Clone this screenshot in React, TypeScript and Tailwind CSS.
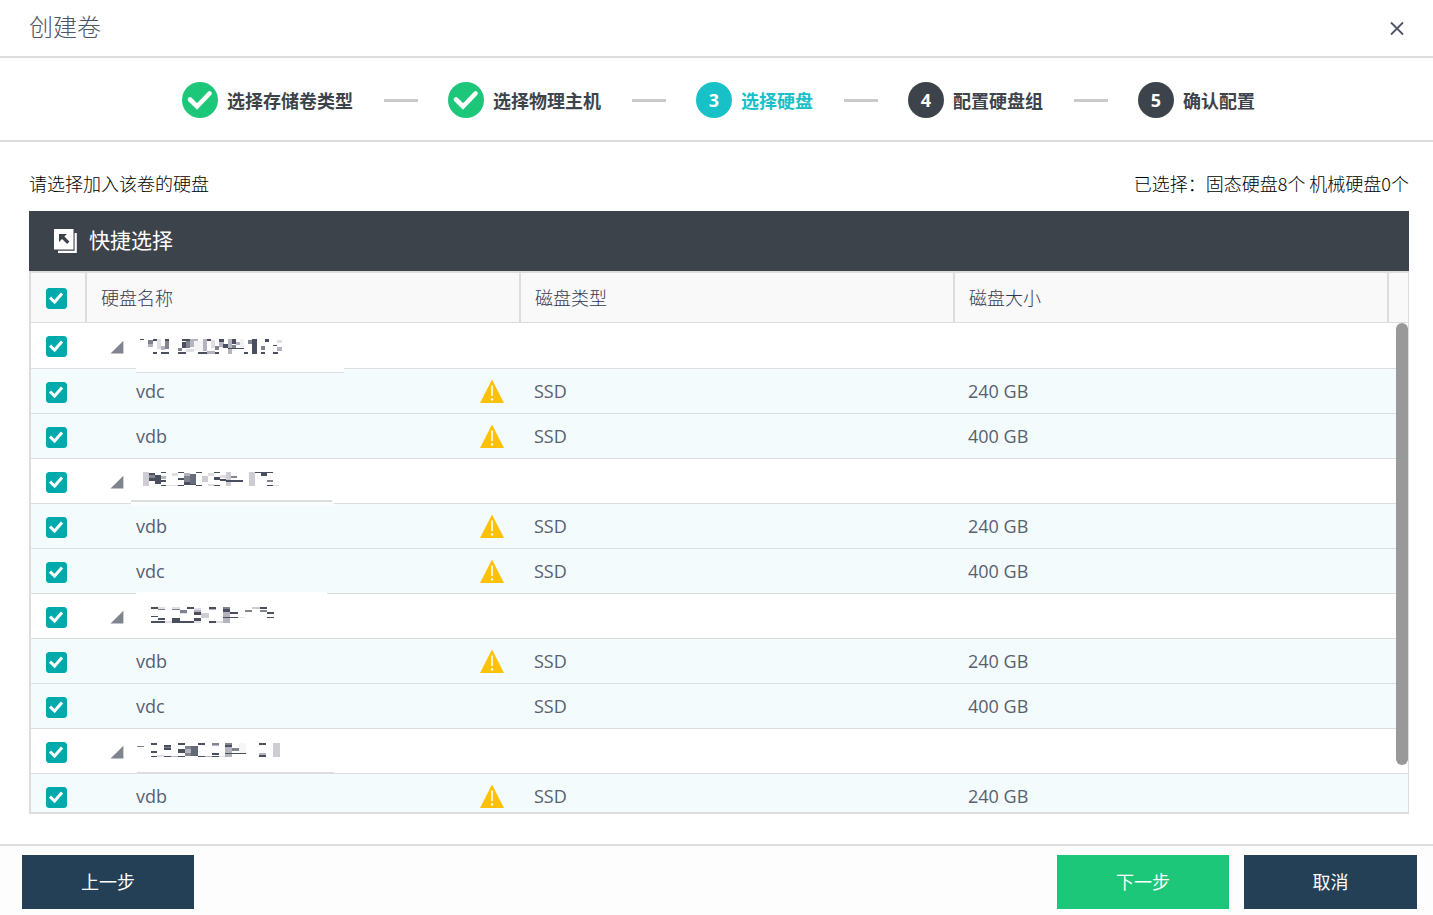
import { Fragment } from "react";

interface Disk {
  name: string;
  type: string;
  size: string;
  warn: boolean;
}

// x, y, width, height, fill
type Block = [number, number, number, number, string];

interface HostGroup {
  id: string;
  mask: Block[];
  disks: Disk[];
}

const D = "#4a4f60";
const M = "#80848f";
const G = "#b3b4bd";
const L = "#dfdfe3";
const W = "#ffffff";
const LINE = "#dddddd";

const steps = [
  { label: "选择存储卷类型", state: "done" },
  { label: "选择物理主机", state: "done" },
  { label: "选择硬盘", state: "active" },
  { label: "配置硬盘组", state: "todo" },
  { label: "确认配置", state: "todo" },
];

const groups: HostGroup[] = [
  {
    id: "host-1",
    mask: [
      [108, 30, 624, 129, W], [108, 159, 624, 3, LINE],
      [120, 60, 12, 3, D], [144, 63, 14, 12, M], [144, 75, 14, 9, G], [158, 99, 13, 6, D], [158, 60, 12, 6, D],
      [171, 60, 12, 30, L], [183, 81, 12, 12, G], [183, 99, 24, 6, D], [195, 60, 12, 6, D], [195, 66, 12, 24, M],
      [246, 60, 24, 6, D], [234, 87, 12, 10, M], [246, 69, 12, 18, D], [258, 66, 12, 21, M], [234, 99, 24, 6, D],
      [270, 60, 12, 24, G], [258, 90, 24, 9, L], [282, 60, 12, 6, G], [282, 66, 26, 30, "#f3f3f5"], [308, 60, 12, 36, G],
      [294, 99, 26, 6, D], [320, 60, 12, 6, D], [321, 96, 24, 9, G], [333, 63, 12, 24, L], [345, 99, 12, 6, D],
      [345, 81, 12, 12, M], [357, 60, 14, 9, D], [357, 69, 14, 15, G], [370, 75, 14, 12, D], [384, 60, 12, 45, G],
      [396, 60, 12, 15, D], [384, 87, 48, 3, D], [396, 78, 12, 9, M], [408, 69, 12, 9, G], [420, 60, 12, 24, "#f1f1f3"],
      [432, 99, 12, 6, D], [444, 63, 12, 12, M], [456, 60, 15, 45, D], [483, 81, 12, 12, M], [495, 60, 12, 9, D],
      [483, 99, 12, 6, D], [519, 78, 12, 3, D], [531, 63, 15, 9, L], [531, 84, 15, 12, G], [519, 99, 14, 6, D],
    ],
    disks: [
      { name: "vdc", type: "SSD", size: "240 GB", warn: true },
      { name: "vdb", type: "SSD", size: "400 GB", warn: true },
    ],
  },
  {
    id: "host-2",
    mask: [
      [93, 30, 609, 114, W], [93, 138, 603, 6, LINE], [93, 144, 609, 12, "#f9fdfd"],
      [129, 54, 18, 42, "#cdcdd3"], [147, 57, 18, 6, D], [147, 63, 18, 9, M], [147, 72, 18, 9, D], [165, 63, 18, 27, D],
      [183, 54, 15, 3, D], [183, 66, 15, 9, G], [183, 78, 15, 6, D], [183, 93, 15, 3, D], [198, 93, 36, 3, L],
      [216, 57, 18, 9, L], [234, 54, 18, 3, D], [234, 72, 18, 6, D], [234, 93, 18, 3, D], [252, 57, 18, 9, G],
      [252, 66, 18, 18, M], [252, 84, 18, 9, D], [270, 60, 18, 30, "#686d7b"], [252, 90, 36, 3, D], [288, 54, 18, 3, D],
      [288, 93, 18, 3, D], [306, 66, 18, 18, "#cdcdd3"], [324, 57, 18, 9, L], [324, 90, 18, 6, L], [342, 54, 18, 3, D],
      [342, 69, 18, 9, D], [342, 93, 18, 3, D], [360, 63, 18, 9, L], [360, 75, 18, 6, D], [378, 54, 15, 42, "#cdcdd3"],
      [393, 66, 18, 6, M], [378, 78, 51, 5, D], [447, 54, 18, 42, "#cdcdd3"], [465, 54, 54, 3, D], [483, 57, 18, 8, D],
      [501, 78, 18, 6, M], [501, 93, 18, 3, D], [519, 93, 18, 3, L],
    ],
    disks: [
      { name: "vdb", type: "SSD", size: "240 GB", warn: true },
      { name: "vdc", type: "SSD", size: "400 GB", warn: true },
    ],
  },
  {
    id: "host-3",
    mask: [
      [108, 9, 573, 138, W],
      [153, 54, 21, 6, D], [174, 54, 21, 6, L], [174, 60, 21, 3, M], [153, 81, 21, 3, D], [174, 87, 21, 6, D],
      [153, 96, 42, 6, D], [195, 96, 21, 6, L], [216, 54, 24, 6, L], [216, 60, 24, 3, M], [240, 63, 21, 10, M],
      [240, 73, 21, 3, L], [216, 87, 24, 15, D], [261, 54, 21, 6, D], [240, 96, 42, 6, D], [282, 57, 21, 6, L],
      [282, 63, 21, 6, G], [282, 69, 21, 10, D], [303, 72, 24, 15, "#cdcdd3"], [282, 87, 21, 9, D], [282, 96, 21, 6, L],
      [327, 54, 21, 6, D], [327, 60, 21, 3, G], [327, 96, 21, 6, D], [348, 96, 21, 6, L], [369, 54, 21, 6, M],
      [369, 60, 21, 9, D], [369, 69, 21, 33, G], [390, 69, 24, 6, D], [369, 84, 45, 3, D], [414, 84, 21, 3, L],
      [435, 63, 21, 6, M], [456, 54, 24, 6, "#cdcdd3"], [480, 54, 21, 6, D], [480, 63, 21, 6, M], [501, 69, 21, 6, D],
      [501, 84, 21, 3, D],
    ],
    disks: [
      { name: "vdb", type: "SSD", size: "240 GB", warn: true },
      { name: "vdc", type: "SSD", size: "400 GB", warn: false },
    ],
  },
  {
    id: "host-4",
    mask: [
      [111, 144, 591, 6, LINE],
      [111, 66, 21, 3, M], [153, 57, 18, 6, D], [153, 81, 18, 6, D], [153, 96, 18, 3, D], [171, 93, 21, 6, L],
      [192, 63, 21, 6, D], [192, 69, 21, 3, M], [192, 72, 21, 6, D], [192, 96, 21, 3, D], [213, 96, 21, 3, G],
      [234, 57, 21, 6, D], [234, 75, 21, 12, D], [234, 96, 21, 3, D], [255, 66, 18, 9, M], [255, 75, 18, 12, G],
      [255, 87, 18, 9, M], [273, 66, 21, 30, "#646978"], [294, 57, 21, 6, D], [294, 96, 21, 3, D], [315, 96, 21, 3, G],
      [336, 57, 21, 6, M], [336, 63, 21, 3, G], [336, 87, 21, 6, D], [336, 96, 21, 3, D], [357, 96, 18, 3, L],
      [375, 57, 21, 6, M], [375, 63, 21, 6, D], [375, 69, 21, 30, G], [396, 72, 21, 9, M], [375, 87, 63, 3, D],
      [417, 57, 21, 30, "#f5f5f6"], [477, 57, 21, 6, D], [477, 87, 21, 6, G], [477, 93, 21, 6, D], [519, 57, 21, 42, "#cdcdd3"],
    ],
    disks: [{ name: "vdb", type: "SSD", size: "240 GB", warn: true }],
  },
];

function Checkbox({ label }: { label: string }) {
  return (
    <label className="grid h-[21px] w-[21px] cursor-pointer">
      <input
        type="checkbox"
        defaultChecked
        aria-label={label}
        className="peer col-start-1 row-start-1 h-[21px] w-[21px] appearance-none rounded-[3px] border border-gray-300 bg-white checked:border-[#00a9ab] checked:bg-[#00a9ab]"
      />
      <svg
        viewBox="0 0 21 21"
        className="pointer-events-none invisible col-start-1 row-start-1 h-[21px] w-[21px] peer-checked:visible"
        fill="none"
        stroke="#fff"
        strokeWidth="3"
      >
        <path d="M4 9.6 8.6 14 16 5.6" />
      </svg>
    </label>
  );
}

function WarningIcon() {
  return (
    <svg viewBox="0 0 24 24" className="h-6 w-6" role="img" aria-label="警告">
      <path d="M12 0.5 24 24H0Z" fill="#ffc107" />
      <path d="M12 6.5V17" stroke="#fff" strokeWidth="1.6" />
      <circle cx="12" cy="20.4" r="1.2" fill="#fff" />
    </svg>
  );
}

function QuickSelectIcon() {
  return (
    <svg viewBox="0 0 23 24" className="h-6 w-[23px]">
      <path d="M0 0h19.5v20.5H0Z" fill="#fff" />
      <path d="M21.7 4v18.8H4" fill="none" stroke="#fff" strokeWidth="2.2" />
      <path d="M5 5h8l-2.6 2.6 5 5-2.2 2.4-5.2-5L5 13Z" fill="#3d434b" />
    </svg>
  );
}

function StepBadge({ index, state }: { index: number; state: string }) {
  if (state === "done") {
    return (
      <svg viewBox="0 0 36 36" className="h-9 w-9">
        <circle cx="18" cy="18" r="18" fill="#1dc779" />
        <path d="M8 17.5 15 24.5 27.5 11.5" fill="none" stroke="#fff" strokeWidth="4.6" strokeLinecap="round" />
      </svg>
    );
  }
  return (
    <span
      className={`flex h-9 w-9 items-center justify-center rounded-full font-['Open_Sans',sans-serif] text-lg text-white ${
        state === "active" ? "bg-[#18c1c8]" : "bg-[#3d434b]"
      }`}
    >
      {index}
    </span>
  );
}

function HostMask({ blocks }: { blocks: Block[] }) {
  return (
    <svg
      viewBox="90 0 660 165"
      className="pointer-events-none absolute -bottom-1.5 left-[43px] h-[55px] w-[220px]"
      shapeRendering="crispEdges"
    >
      {blocks.map(([x, y, w, h, fill], i) => (
        <rect key={i} x={x} y={y} width={w} height={h} fill={fill} />
      ))}
    </svg>
  );
}

export default function App() {
  return (
    <div className="flex h-screen flex-col bg-white font-['Noto_Sans_CJK_SC',sans-serif] text-lg font-light text-black">
      {/* Title bar */}
      <header className="flex h-[58px] shrink-0 items-center justify-between border-b-2 border-[#dddddd] pr-7 pl-[29px] text-[#4f5466]">
        <h1 className="pb-1 text-2xl">创建卷</h1>
        <button type="button" aria-label="关闭" className="flex h-4 w-4 items-center justify-center">
          <svg viewBox="0 0 16 16" className="h-4 w-4" stroke="currentColor" strokeWidth="1.8">
            <path d="M2 2.5 14 14.5M14 2.5 2 14.5" />
          </svg>
        </button>
      </header>

      {/* Steps */}
      <ol className="flex shrink-0 items-center justify-center border-b-2 border-[#dddddd] pt-6 pb-[22px] pl-1 font-bold">
        {steps.map((step, i) => (
          <Fragment key={step.label}>
            {i > 0 && <li aria-hidden="true" className="mr-[30px] ml-[31px] h-[3px] w-[34px] bg-[#c9c9c9]" />}
            <li className="flex items-center gap-[9px]">
              <StepBadge index={i + 1} state={step.state} />
              <span className={step.state === "active" ? "text-[#18c1c8]" : "text-[#3d434b]"}>{step.label}</span>
            </li>
          </Fragment>
        ))}
      </ol>

      <main className="flex min-h-0 flex-1 flex-col pt-[27px] pr-6 pb-[30px] pl-[29px]">
        <div className="mb-3.5 flex shrink-0 justify-between">
          <p>请选择加入该卷的硬盘</p>
          <p>已选择：固态硬盘8个 机械硬盘0个</p>
        </div>

        <div className="flex h-[60px] shrink-0 items-center bg-[#3d434b] pl-[25px]">
          <button type="button" className="flex items-center gap-3 text-[21px] font-normal text-white">
            <QuickSelectIcon />
            <span className="pb-1">快捷选择</span>
          </button>
        </div>

        {/* Disk list */}
        <div className="relative flex min-h-0 flex-1 flex-col border-y-2 border-r border-l-2 border-[#dddddd]">
          <div className="min-h-0 flex-1 overflow-y-auto [scrollbar-width:none]">
            <table className="w-full table-fixed border-separate border-spacing-0 text-left">
              <colgroup>
                <col className="w-14" />
                <col />
                <col />
                <col />
                <col className="w-[19px]" />
              </colgroup>
              <thead className="sticky top-0 z-10 bg-[#f9f9f9] text-[#33384d]">
                <tr className="h-[50px]">
                  <th className="border-r-2 border-b border-[#dddddd] pt-0.5 pl-[15px]">
                    <Checkbox label="全选" />
                  </th>
                  <th className="border-r-2 border-b border-[#dddddd] pb-0.5 pl-3.5 font-light">硬盘名称</th>
                  <th className="border-r-2 border-b border-[#dddddd] pb-0.5 pl-3.5 font-light">磁盘类型</th>
                  <th className="border-r-2 border-b border-[#dddddd] pb-0.5 pl-3.5 font-light">磁盘大小</th>
                  <td className="border-b border-[#dddddd]" />
                </tr>
              </thead>
              <tbody className="font-['Open_Sans','Noto_Sans_CJK_SC',sans-serif] font-normal text-[#5a5f6e]">
                {groups.map((group) => (
                  <Fragment key={group.id}>
                    <tr className="h-[45px] first:h-[46px]">
                      <td className="border-b border-[#dddddd] pt-0.5 pl-[15px]">
                        <Checkbox label={group.id} />
                      </td>
                      <td colSpan={4} className="relative border-b border-[#dddddd] pt-0.5 pl-[23px]">
                        <HostMask blocks={group.mask} />
                        <button type="button" aria-label="收起" className="flex h-[14px] w-[14px]">
                          <svg viewBox="0 0 14 14" className="h-[14px] w-[14px]">
                            <path d="M13.4 0.8V13.4H0.5Z" fill="#80848f" />
                          </svg>
                        </button>
                      </td>
                    </tr>
                    {group.disks.map((disk) => (
                      <tr key={disk.name} className="h-[45px] bg-[#f3fbfd]">
                        <td className="border-b border-[#dddddd] pt-0.5 pl-[15px]">
                          <Checkbox label={disk.name} />
                        </td>
                        <td className="border-b border-[#dddddd] pr-[17px] pl-[49px]">
                          <div className="flex items-center justify-between">
                            {disk.name}
                            {disk.warn && <WarningIcon />}
                          </div>
                        </td>
                        <td className="border-b border-[#dddddd] pl-[13px]">{disk.type}</td>
                        <td colSpan={2} className="border-b border-[#dddddd] pl-[13px]">{disk.size}</td>
                      </tr>
                    ))}
                  </Fragment>
                ))}
              </tbody>
            </table>
          </div>
          <div className="absolute top-[50px] right-0 z-20 h-[82%] w-3 rounded-full bg-[#999999]" />
        </div>
      </main>

      <footer className="flex shrink-0 items-center justify-between border-t-2 border-[#dddddd] bg-[#fdfdfd] pt-[9px] pr-4 pb-1.5 pl-[22px] font-normal text-white">
        <button type="button" className="h-[54px] w-[172px] bg-[#234056] pb-0.5">上一步</button>
        <div className="flex gap-[15px]">
          <button type="button" className="h-[54px] w-[172px] bg-[#1dc779] pb-0.5">下一步</button>
          <button type="button" className="h-[54px] w-[173px] bg-[#234056] pb-0.5">取消</button>
        </div>
      </footer>
    </div>
  );
}
